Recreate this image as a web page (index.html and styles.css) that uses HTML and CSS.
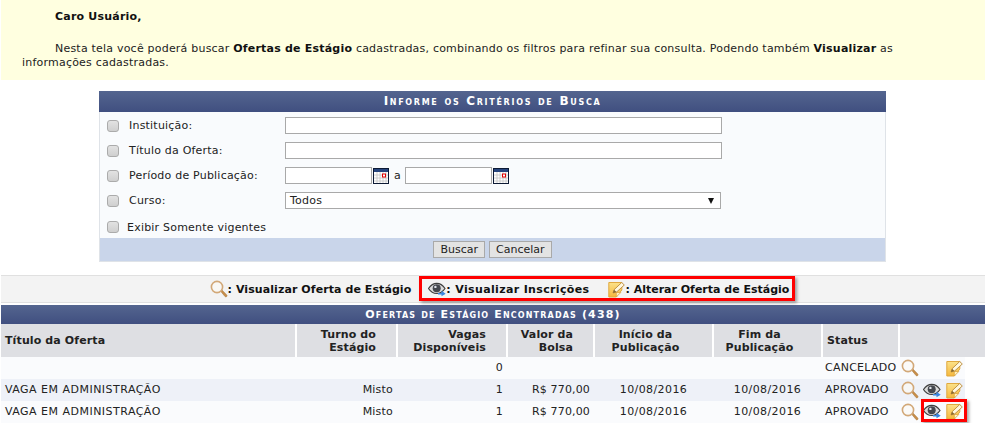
FILE: index.html
```html
<!DOCTYPE html>
<html lang="pt-BR">
<head>
<meta charset="utf-8">
<title>Ofertas de Estágio</title>
<link rel="stylesheet" href="styles.css">
</head>
<body>
<svg class="defs" width="0" height="0" aria-hidden="true">
  <defs>
    <linearGradient id="g-nota" x1="0" y1="0" x2="0" y2="1">
      <stop offset="0" stop-color="#fbe28a"/>
      <stop offset="1" stop-color="#f6b83c"/>
    </linearGradient>
    <symbol id="i-lupa" viewBox="0 0 18 18">
      <path d="M10.500 11l1.200-1.200 5 5.200c.5.600.3 1.200-.1 1.600-.4.400-1 .4-1.500 0z" fill="#c98f4a" stroke="#a87434" stroke-width=".6"/>
      <circle cx="7" cy="7" r="5.600" fill="#fbfaf5" fill-opacity=".7" stroke="#d2a878" stroke-width="1.600"/>
    </symbol>
    <symbol id="i-olho" viewBox="0 0 18 14">
      <path d="M.5 6C3 2.300 6 .8 8.700.8c3 0 6 1.700 8.300 5.200-2.300 3.400-5 5-8.300 5C5.500 11 2.800 9.500.5 6z" fill="#dcdcdc" stroke="#3f3f3f" stroke-width="1.200"/>
      <circle cx="8.700" cy="5.800" r="4" fill="#45484f"/>
      <circle cx="7.400" cy="4.400" r="1.200" fill="#dfe3ea"/>
      <path d="M10 10.500h3.500V8.300l4.200 3-4.200 2.500v-1.700H10z" fill="#3a85e0"/>
    </symbol>
    <symbol id="i-nota" viewBox="0 0 17 17">
      <path d="M.8 1.500h13v7.500l-5.500 7H.8z" fill="url(#g-nota)" stroke="#e0a93f" stroke-width="1"/>
      <path d="M8.300 16v-4.500h4.500z" fill="#fff2c2" stroke="#d99f38" stroke-width=".7"/>
      <path d="M5 12l1-3.200L13.700 1.500 16.300 4l-7.700 7z" fill="#fff8e0" stroke="#b98a3a" stroke-width=".9"/>
      <path d="M5 12l1-3.200 2.600 2.200z" fill="#8a6a2c"/>
    </symbol>
    <symbol id="i-cal" viewBox="0 0 16 16">
      <rect x=".5" y=".5" width="15" height="15" fill="#fff" stroke="#0d1a35"/>
      <rect x="1" y="1" width="14" height="3" fill="#27457e"/>
      <path d="M1 7h14M1 10h14M1 13h14M4 4v11M7 4v11M10 4v11M13 4v11" stroke="#c4c4c4" stroke-width=".8"/>
      <rect x="9.500" y="6" width="3" height="3" fill="#fff" stroke="#e00000"/>
    </symbol>
  </defs>
</svg>

<section class="aviso">
  <p class="aviso-ola"><b>Caro Usuário,</b></p>
  <p class="aviso-texto">Nesta tela você poderá buscar <b>Ofertas de Estágio</b> cadastradas, combinando os filtros para refinar sua consulta. Podendo também <b>Visualizar</b> as informações cadastradas.</p>
</section>

<form class="busca">
  <h2 class="faixa faixa-busca">Informe os Critérios de Busca</h2>
  <div class="busca-corpo">
    <div class="linha">
      <input type="checkbox" class="chk"><label class="rotulo">Instituição:</label>
      <input type="text" class="campo campo-longo">
    </div>
    <div class="linha">
      <input type="checkbox" class="chk"><label class="rotulo">Título da Oferta:</label>
      <input type="text" class="campo campo-longo">
    </div>
    <div class="linha">
      <input type="checkbox" class="chk"><label class="rotulo">Período de Publicação:</label>
      <input type="text" class="campo campo-data">
      <svg class="cal"><use href="#i-cal"/></svg>
      <span class="ate">a</span>
      <input type="text" class="campo campo-data">
      <svg class="cal"><use href="#i-cal"/></svg>
    </div>
    <div class="linha">
      <input type="checkbox" class="chk"><label class="rotulo">Curso:</label>
      <div class="campo campo-select"><span>Todos</span><span class="seta"></span></div>
    </div>
    <div class="linha linha-vigentes">
      <input type="checkbox" class="chk"><label class="rotulo-vigentes">Exibir Somente vigentes</label>
    </div>
  </div>
  <div class="busca-rodape">
    <button type="button" class="botao">Buscar</button>
    <button type="button" class="botao">Cancelar</button>
  </div>
</form>

<div class="legenda">
  <span class="leg-item"><svg class="ic-lupa"><use href="#i-lupa"/></svg>: Visualizar Oferta de Estágio</span>
  <span class="leg-item leg-olho"><svg class="ic-olho"><use href="#i-olho"/></svg>: Visualizar Inscrições</span>
  <span class="leg-item leg-nota"><svg class="ic-nota"><use href="#i-nota"/></svg>: Alterar Oferta de Estágio</span>
</div>

<table class="ofertas">
  <colgroup>
    <col class="c1"><col class="c2"><col class="c3"><col class="c4"><col class="c5"><col class="c6"><col class="c7">
    <col class="c8"><col class="c9"><col class="c10"><col class="c11">
  </colgroup>
  <caption class="faixa">Ofertas de Estágio Encontradas (438)</caption>
  <thead>
    <tr>
      <th class="esq">Título da Oferta</th>
      <th class="dir th-recuo">Turno do<br>Estágio</th>
      <th class="dir th-recuo">Vagas<br>Disponíveis</th>
      <th class="dir th-recuo">Valor da<br>Bolsa</th>
      <th class="cen th-data">Início da<br>Publicação</th>
      <th class="cen th-data">Fim da<br>Publicação</th>
      <th class="esq">Status</th>
      <th colspan="4"></th>
    </tr>
  </thead>
  <tbody>
    <tr class="l-clara">
      <td></td><td></td><td class="dir">0</td><td></td><td></td><td></td>
      <td class="status">CANCELADO</td>
      <td class="ic"><svg class="ic-lupa"><use href="#i-lupa"/></svg></td>
      <td class="ic"></td>
      <td class="ic"><svg class="ic-nota"><use href="#i-nota"/></svg></td>
    </tr>
    <tr class="l-azul">
      <td class="titulo">VAGA EM ADMINISTRAÇÃO</td><td class="dir">Misto</td><td class="dir">1</td><td class="dir valor">R$ 770,00</td>
      <td class="cen data">10/08/2016</td><td class="cen data">10/08/2016</td>
      <td class="status">APROVADO</td>
      <td class="ic"><svg class="ic-lupa"><use href="#i-lupa"/></svg></td>
      <td class="ic"><svg class="ic-olho"><use href="#i-olho"/></svg></td>
      <td class="ic"><svg class="ic-nota"><use href="#i-nota"/></svg></td>
    </tr>
    <tr class="l-clara l-ultima">
      <td class="titulo">VAGA EM ADMINISTRAÇÃO</td><td class="dir">Misto</td><td class="dir">1</td><td class="dir valor">R$ 770,00</td>
      <td class="cen data">10/08/2016</td><td class="cen data">10/08/2016</td>
      <td class="status">APROVADO</td>
      <td class="ic"><svg class="ic-lupa"><use href="#i-lupa"/></svg></td>
      <td class="ic"><svg class="ic-olho"><use href="#i-olho"/></svg></td>
      <td class="ic"><svg class="ic-nota"><use href="#i-nota"/></svg></td>
    </tr>
  </tbody>
</table>

<div class="destaque destaque-legenda"></div>
<div class="destaque destaque-linha"></div>
</body>
</html>
```
FILE: styles.css
```css
html, body { margin: 0; padding: 0; }
body {
  position: relative;
  width: 985px;
  height: 423px;
  overflow: hidden;
  background: #fff;
  color: #222;
  font: 11px "DejaVu Sans", Verdana, sans-serif;
  letter-spacing: .21px;
}
.defs { position: absolute; }
b { color: #111; }

.aviso {
  box-sizing: border-box;
  height: 80px;
  margin-left: 1px;
  padding: 10px 0 0 21px;
  background: #ffffe0;
  line-height: 14px;
}
.aviso p { margin: 0; }
.aviso-ola { padding-left: 33px; height: 32px; }
.aviso-texto { text-indent: 33px; width: 885px; }

.busca {
  width: 787px;
  margin: 11px 0 0 99px;
}
.faixa {
  margin: 0;
  height: 21px;
  line-height: 21px;
  text-align: center;
  color: #fff;
  font-size: 11px;
  font-weight: bold;
  font-variant: small-caps;
  letter-spacing: 1.15px;
  background: linear-gradient(#54658f, #404f80);
}
.faixa-busca { font-size: 12px; letter-spacing: 1.7px; }
.busca-corpo {
  box-sizing: border-box;
  height: 126px;
  padding-top: 1px;
  background: #f9fbfd;
  border: solid #dfe3e8;
  border-width: 0 1px;
}
.linha {
  display: flex;
  align-items: center;
  height: 25px;
  padding-left: 7px;
}
.chk {
  appearance: none;
  box-sizing: border-box;
  width: 12px;
  height: 12px;
  margin: 0;
  background: linear-gradient(#e2e2e2, #cfcfcf);
  border: 1px solid #ababab;
  border-radius: 3px;
}
.rotulo { width: 156px; margin-left: 10px; color: #222; }
.rotulo-vigentes { margin-left: 8px; }
.linha-vigentes { height: 25px; padding-top: 3px; box-sizing: border-box; }
.campo {
  box-sizing: border-box;
  height: 17px;
  background: #fff;
  border: 1px solid #a9a9a9;
  padding: 0;
  font: inherit;
  border-radius: 0;
}
.campo-longo { width: 437px; }
.campo-data { width: 87px; }
.campo-select {
  display: flex;
  align-items: center;
  justify-content: space-between;
  width: 436px;
  padding: 0 6px 0 4px;
}
.seta {
  width: 0;
  height: 0;
  border: solid transparent;
  border-width: 6px 3.5px 0;
  border-top-color: #111;
}
.cal { width: 16px; height: 16px; margin-left: 1px; }
.ate { margin: 0 4px 0 5px; }
.busca-rodape {
  box-sizing: border-box;
  display: flex;
  justify-content: center;
  gap: 4px;
  height: 24px;
  padding-top: 3px;
  background: #c9d5ea;
  border: solid #dfe3e8;
  border-width: 0 1px 1px;
}
.botao {
  box-sizing: border-box;
  height: 17px;
  padding: 0 6px;
  font: inherit;
  color: #222;
  background: #e3e3e3;
  border: 1px solid #a9a9a9;
  border-radius: 0;
}

.legenda {
  box-sizing: border-box;
  display: flex;
  justify-content: center;
  align-items: center;
  height: 28px;
  margin: 13px 0 0 1px;
  padding-left: 13px;
  background: #f3f3f3;
  border: solid #e0e0e0;
  border-width: 1px 0;
  font-weight: bold;
  color: #111;
  letter-spacing: .08px;
}
.leg-item { display: flex; align-items: center; white-space: nowrap; }
.leg-olho { margin-left: 17px; letter-spacing: .35px; }
.leg-nota { margin-left: 19px; letter-spacing: 0; }
.ic-lupa { width: 18px; height: 18px; }
.ic-olho { width: 18px; height: 15px; }
.ic-nota { width: 17px; height: 17px; }

.ofertas {
  table-layout: fixed;
  width: 984px;
  margin: 2px 0 0 1px;
  border-collapse: collapse;
  border-spacing: 0;
}
.ofertas .faixa { height: 19px; line-height: 19px; }
.c1 { width: 295px; }
.c2 { width: 101px; }
.c3 { width: 110px; }
.c4 { width: 87px; }
.c5 { width: 119px; }
.c6 { width: 109px; }
.c7 { width: 77px; }
.c8 { width: 21px; }
.c9 { width: 23px; }
.c10 { width: 22px; }
.c11 { width: 20px; }
.ofertas th {
  height: 33px;
  padding: 0 4px;
  background: #dedfe3;
  border-right: 2px solid #fff;
  font-weight: bold;
  color: #222;
  line-height: 13px;
  letter-spacing: .12px;
}
.ofertas th:last-child { border-right: 0; }
.ofertas th.th-recuo { padding-right: 20px; }
.ofertas th.th-data { padding-right: 20px; }
.ofertas td {
  height: 22px;
  padding: 0 4px 2px;
  box-sizing: border-box;
  white-space: nowrap;
}
.esq { text-align: left; }
.dir { text-align: right; }
.cen { text-align: center; }
.ofertas td.titulo { letter-spacing: .48px; }
.ofertas td.data { letter-spacing: .4px; }
.ofertas td.valor { letter-spacing: .15px; }
.ofertas td.ic { padding: 0; text-align: center; }
.ofertas td.ic svg { display: block; margin: 0 auto; }
.ofertas td.status { padding-left: 3px; letter-spacing: .25px; }
.l-clara td { background: #fafbfd; }
.l-azul td { background: #eef1f8; }
.l-ultima td { border-bottom: 1px solid #eef1f8; padding-bottom: 0; }

.destaque {
  position: absolute;
  box-sizing: border-box;
  border: 3px solid #f00;
  box-shadow: 2px 2px 3px rgba(0,0,0,.35);
}
.destaque-legenda { left: 419px; top: 276px; width: 376px; height: 25px; }
.destaque-linha { left: 921px; top: 399px; width: 46px; height: 23px; }
```
